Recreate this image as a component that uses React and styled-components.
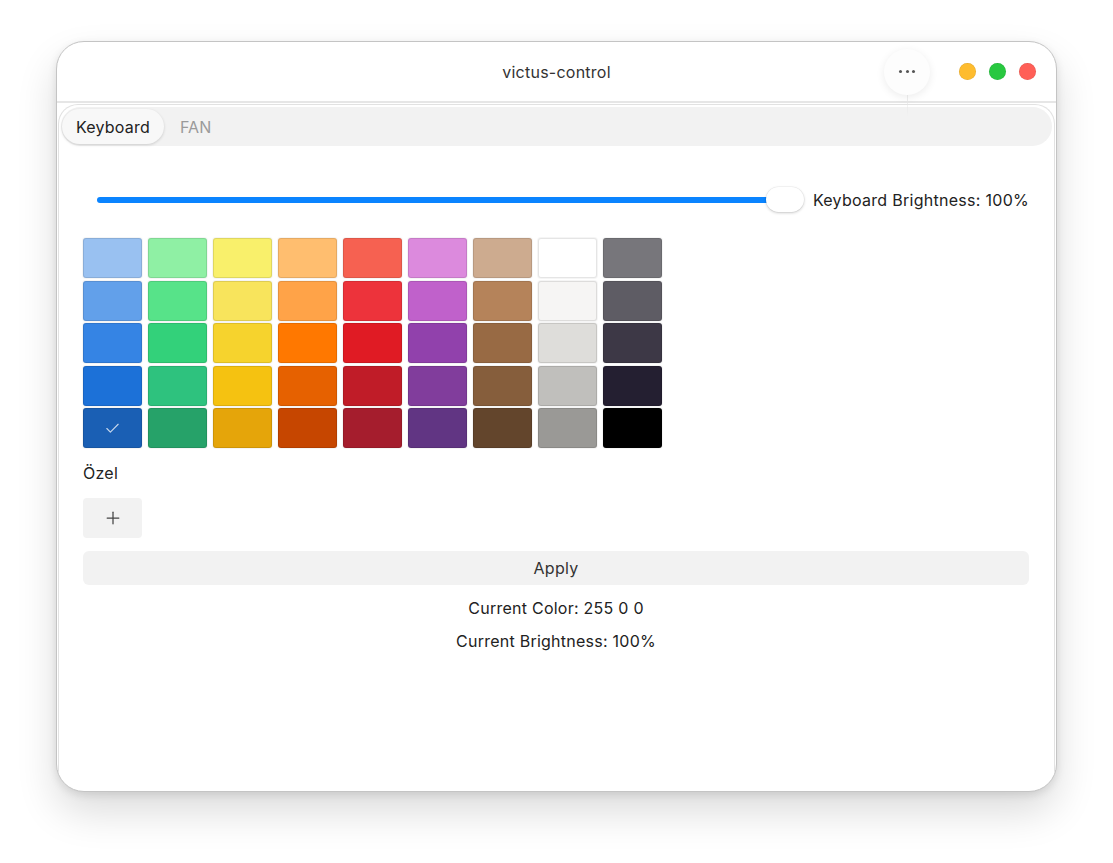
import React, { useState } from 'react';
import styled, { createGlobalStyle } from 'styled-components';
import { Check, Plus } from 'lucide-react';

const GlobalStyle = createGlobalStyle`
  html, body {
    margin: 0;
    padding: 0;
    background: #ffffff;
    font-family: Inter, "Noto Sans", "Liberation Sans", sans-serif;
    -webkit-font-smoothing: antialiased;
  }
`;

const palette = [
  ['#99c1f1', '#62a0ea', '#3584e4', '#1c71d8', '#1a5fb4'],
  ['#8ff0a4', '#57e389', '#33d17a', '#2ec27e', '#26a269'],
  ['#f9f06b', '#f8e45c', '#f6d32d', '#f5c211', '#e5a50a'],
  ['#ffbe6f', '#ffa348', '#ff7800', '#e66100', '#c64600'],
  ['#f66151', '#ed333b', '#e01b24', '#c01c28', '#a51d2d'],
  ['#dc8add', '#c061cb', '#9141ac', '#813d9c', '#613583'],
  ['#cdab8f', '#b5835a', '#986a44', '#865e3c', '#63452c'],
  ['#ffffff', '#f6f5f4', '#deddda', '#c0bfbc', '#9a9996'],
  ['#77767b', '#5e5c64', '#3d3846', '#241f31', '#000000'],
];

function App() {
  const [tab, setTab] = useState('Keyboard');
  const [selected, setSelected] = useState('#1a5fb4');

  return (
    <>
      <GlobalStyle />
      <Page>
        <Window>
          <TitleBar>
            <span />
            <Title>victus-control</Title>
            <Controls>
              <MoreButton>
                <Dot />
                <Dot />
                <Dot />
              </MoreButton>
              <Light color="#febc2e" />
              <Light color="#28c840" />
              <Light color="#ff5f57" />
            </Controls>
          </TitleBar>

          <Panel>
            <TabBar>
              {['Keyboard', 'FAN'].map((t) => (
                <Tab key={t} active={t === tab} onClick={() => setTab(t)}>
                  {t}
                </Tab>
              ))}
            </TabBar>

            <Body>
              <SliderRow>
                <SliderWrap>
                  <Track />
                  <Thumb />
                </SliderWrap>
                <Label>Keyboard Brightness: 100%</Label>
              </SliderRow>

              <Grid>
                {palette.map((col, ci) =>
                  col.map((c, ri) => (
                    <Swatch
                      key={c}
                      style={{ background: c, gridColumn: ci + 1, gridRow: ri + 1 }}
                      onClick={() => setSelected(c)}
                    >
                      {selected === c && <Check size={17} strokeWidth={1.6} />}
                    </Swatch>
                  ))
                )}
              </Grid>

              <SectionLabel>Özel</SectionLabel>
              <AddButton>
                <Plus size={20} strokeWidth={1.5} />
              </AddButton>

              <ApplyButton>Apply</ApplyButton>
              <Info>Current Color: 255 0 0</Info>
              <Info>Current Brightness: 100%</Info>
            </Body>
          </Panel>
        </Window>
      </Page>
    </>
  );
}

export default App;

const Page = styled.div`
  padding: 41px 56px 70px;
`;

const Window = styled.div`
  width: 1001px;
  height: 751px;
  box-sizing: border-box;
  background: #ffffff;
  border-radius: 28px;
  border: 1px solid #c4c4c4;
  box-shadow: 0 20px 40px rgba(0, 0, 0, 0.14), 0 3px 8px rgba(0, 0, 0, 0.1);
  display: flex;
  flex-direction: column;
  overflow: hidden;
`;

const TitleBar = styled.div`
  height: 59px;
  flex-shrink: 0;
  display: grid;
  grid-template-columns: 1fr auto 1fr;
  align-items: center;
  border-bottom: 2px solid #e6e6e6;
  padding: 0 20px 0 20px;
`;

const Title = styled.div`
  font-size: 16px;
  color: #333333;
  letter-spacing: 0.25px;
`;

const Controls = styled.div`
  display: flex;
  align-items: center;
  justify-content: flex-end;
  gap: 13px;
`;

const MoreButton = styled.div`
  position: relative;
  width: 46px;
  height: 46px;
  border-radius: 50%;
  background: #fdfdfd;
  box-shadow: 0 2px 8px rgba(0, 0, 0, 0.08);
  display: flex;
  align-items: center;
  justify-content: center;
  gap: 3.5px;
  margin-right: 16px;

  &::before {
    content: '';
    position: absolute;
    left: -22px;
    right: -22px;
    top: 50%;
    height: 1px;
    background: linear-gradient(90deg, transparent, #ececec 30%, transparent 30%, transparent 70%, #ececec 70%, transparent);
    z-index: -1;
  }
  &::after {
    content: '';
    position: absolute;
    top: 46px;
    left: 50%;
    width: 1px;
    height: 22px;
    background: linear-gradient(#e4e4e4, transparent);
  }
`;

const Dot = styled.span`
  width: 3px;
  height: 3px;
  border-radius: 50%;
  background: #555555;
`;

const Light = styled.span`
  width: 17px;
  height: 17px;
  border-radius: 50%;
  background: ${(p) => p.color};
  box-shadow: inset 0 0 0 0.5px rgba(0, 0, 0, 0.12);
`;

const Panel = styled.div`
  flex: 1;
  margin: 1px 1px 0;
  border: 1px solid #e2e2e2;
  border-bottom: none;
  border-radius: 20px 20px 0 0;
  padding: 2px 2px 0;
  display: flex;
  flex-direction: column;
`;

const TabBar = styled.div`
  height: 39px;
  flex-shrink: 0;
  box-sizing: border-box;
  background: #f2f2f2;
  border-radius: 20px;
  padding: 2px 1px;
  display: flex;
  gap: 2px;
`;

const Tab = styled.div`
  padding: 0 14px;
  display: flex;
  align-items: center;
  border-radius: 18px;
  font-size: 16px;
  letter-spacing: 0.2px;
  cursor: pointer;
  color: ${(p) => (p.active ? '#222222' : '#9a9a9a')};
  background: ${(p) => (p.active ? '#f8f8f8' : 'transparent')};
  box-shadow: ${(p) => (p.active ? '0 1px 3px rgba(0,0,0,0.16)' : 'none')};
`;

const Body = styled.div`
  padding: 0 23px 0 22px;
  display: flex;
  flex-direction: column;
`;

const SliderRow = styled.div`
  margin-top: 41px;
  padding-left: 14px;
  display: flex;
  align-items: center;
  height: 25px;
`;

const SliderWrap = styled.div`
  position: relative;
  flex: 1;
  height: 25px;
  display: flex;
  align-items: center;
`;

const Track = styled.div`
  width: calc(100% - 20px);
  height: 6px;
  border-radius: 3px;
  background: #0a84ff;
`;

const Thumb = styled.div`
  position: absolute;
  right: 0;
  top: 0;
  width: 38px;
  height: 25px;
  border-radius: 13px;
  background: #ffffff;
  box-shadow: 0 1px 3px rgba(0, 0, 0, 0.2), 0 0 0 0.5px rgba(0, 0, 0, 0.06);
`;

const Label = styled.span`
  margin-left: 9px;
  font-size: 16px;
  letter-spacing: 0.28px;
  color: #222222;
`;

const Grid = styled.div`
  margin-top: 26px;
  display: grid;
  grid-template-columns: repeat(9, 59px);
  grid-template-rows: repeat(5, 40px);
  column-gap: 6px;
  row-gap: 2.5px;
`;

const Swatch = styled.div`
  border-radius: 3px;
  box-shadow: inset 0 0 0 1px rgba(0, 0, 0, 0.1), 0 0 0 1px rgba(0, 0, 0, 0.04);
  display: flex;
  align-items: center;
  justify-content: center;
  color: rgba(255, 255, 255, 0.75);
  cursor: pointer;
`;

const SectionLabel = styled.div`
  margin-top: 15px;
  font-size: 16px;
  letter-spacing: 0.25px;
  color: #222222;
  line-height: 20px;
`;

const AddButton = styled.div`
  margin-top: 15px;
  width: 59px;
  height: 40px;
  border-radius: 4px;
  background: #f2f2f2;
  display: flex;
  align-items: center;
  justify-content: center;
  color: #444444;
`;

const ApplyButton = styled.div`
  margin-top: 13px;
  height: 34px;
  border-radius: 6px;
  background: #f2f2f2;
  display: flex;
  align-items: center;
  justify-content: center;
  font-size: 16px;
  letter-spacing: 0.25px;
  color: #333333;
`;

const Info = styled.div`
  margin-top: 13px;
  text-align: center;
  font-size: 16px;
  letter-spacing: 0.25px;
  line-height: 20px;
  color: #222222;
`;
